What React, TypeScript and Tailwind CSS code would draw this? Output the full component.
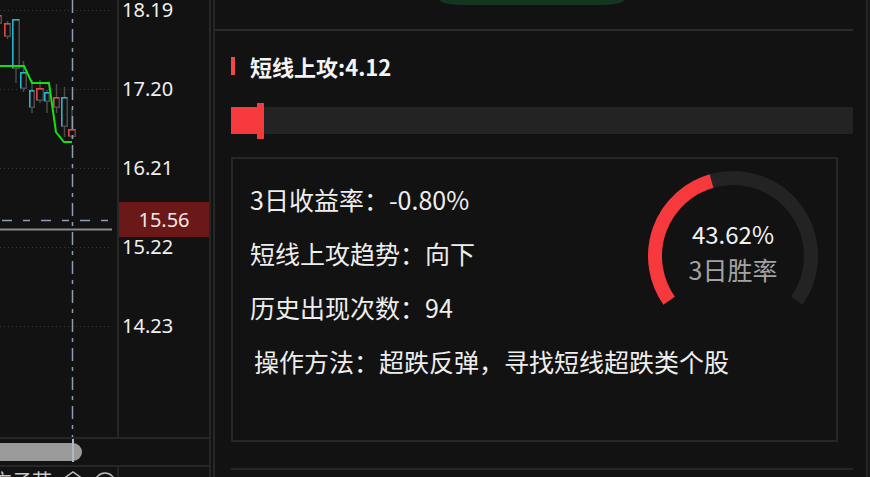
import React from 'react'

const RED = '#f5393c'

// candles: x, w, bodyTop, bodyBottom, wickTop, wickBottom, colour
const candles: [number, number, number, number, number, number, string][] = [
  [-4, 6, 15, 24, 13, 26, '#e04848'],
  [4, 7, 23, 37, 21, 39, '#e04848'],
  [12, 8, 19, 69, 19, 83, '#28b4c8'],
  [20, 7, 72, 89, 61, 92, '#28b4c8'],
  [29, 6, 90, 108, 80, 113, '#28b4c8'],
  [36, 8, 88, 101, 80, 103, '#e04848'],
  [44, 6, 92, 102, 90, 113, '#28b4c8'],
  [53, 7, 97, 108, 84, 113, '#e04848'],
  [61, 7, 97, 127, 87, 137, '#28b4c8'],
  [68, 8, 129, 137, 109, 139, '#e04848'],
]

const gridYs = [10, 89, 168, 247, 326]
const prices = ['18.19', '17.20', '16.21', '15.22', '14.23']

function Chart() {
  return (
    <svg width="117" height="437" className="block">
      {gridYs.map(y => (
        <line key={y} x1="0" x2="110" y1={y + 0.5} y2={y + 0.5} stroke="#3a3a3a" strokeDasharray="1 3" />
      ))}
      {candles.map(([x, w, t, b, wt, wb, c], i) => {
        const mx = x + w / 2
        return (
          <g key={i}>
            <line x1={mx} x2={mx} y1={wt} y2={t} stroke="#4a4a4a" strokeWidth="1.5" />
            <line x1={mx} x2={mx} y1={b} y2={wb} stroke="#4a4a4a" strokeWidth="1.5" />
            <rect x={x + 0.75} y={t + 0.75} width={w - 1.5} height={b - t - 1.5} fill="#121212" stroke="#4c4c4c" strokeWidth="1.5" />
            <polyline points={`${x + 0.75},${b - 1} ${x + 0.75},${t + 0.75} ${x + w - 0.75},${t + 0.75}`} fill="none" stroke={c} strokeWidth="1.5" />
          </g>
        )
      })}
      <polyline
        points="0,66 24,66 32,83 49,83 56,132 64,142 72,142"
        fill="none"
        stroke="#14e014"
        strokeWidth="2"
      />
      <line x1="72.5" x2="72.5" y1="0" y2="437" stroke="#8e9db4" strokeWidth="1.5" strokeDasharray="13 6 4 6" />
      <line x1="0" x2="110" y1="220.5" y2="220.5" stroke="#8e9db4" strokeWidth="1.5" strokeDasharray="10 11 7 11" strokeDashoffset="-2" />
      <line x1="0" x2="112" y1="229.5" y2="229.5" stroke="#8a8a8a" strokeWidth="2" />
    </svg>
  )
}

function polar(cx: number, cy: number, r: number, deg: number) {
  const a = (deg * Math.PI) / 180
  return [cx + r * Math.sin(a), cy - r * Math.cos(a)]
}

function arc(cx: number, cy: number, r: number, from: number, to: number) {
  const [x1, y1] = polar(cx, cy, r, from)
  const [x2, y2] = polar(cx, cy, r, to)
  const large = to - from > 180 ? 1 : 0
  return `M ${x1} ${y1} A ${r} ${r} 0 ${large} 1 ${x2} ${y2}`
}

function Gauge({ value }: { value: number }) {
  const start = -125
  const end = 125
  const mid = start + (end - start) * value
  return (
    <svg width="180" height="162" className="block overflow-visible shrink-0">
      <path d={arc(90, 84, 78, mid, end)} fill="none" stroke="#232323" strokeWidth="14" />
      <path d={arc(90, 84, 78, start, mid)} fill="none" stroke={RED} strokeWidth="14" />
      <text x="90" y="72" textAnchor="middle" fill="#f2f2f2" fontSize="24">
        43.62%
      </text>
      <text x="90" y="108" textAnchor="middle" fill="#a3a3a3" fontSize="25">
        3日胜率
      </text>
    </svg>
  )
}

export default function App() {
  return (
    <div className="w-[870px] h-[477px] bg-[#121212] flex overflow-hidden text-[#f0f0f0] font-['Noto_Sans_CJK_SC','Noto_Sans',sans-serif]">
      {/* left: chart + axis */}
      <div className="w-[211px] h-[477px] shrink-0 border-r-2 border-[#262626] flex flex-col overflow-hidden">
        <div className="h-[437px] shrink-0 flex">
          <div className="w-[117px] shrink-0">
            <Chart />
          </div>
          <div className="w-[2px] bg-[#262626]" />
          <div className="relative flex-1 flex flex-col pl-[3px] font-['Noto_Sans',sans-serif] text-[20px]">
            {prices.map(p => (
              <div key={p} className="h-[79px] leading-[20px] shrink-0">
                {p}
              </div>
            ))}
            <div className="absolute left-0 right-0 top-[202px] h-[35px] bg-[#6b1818] flex items-center justify-center text-[20px] text-[#f2e8e8]">
              15.56
            </div>
          </div>
        </div>
        <div className="h-[2px] shrink-0 bg-[#262626]" />
        <div className="relative h-[26px] shrink-0">
          <div className="absolute left-0 top-[4px] w-[82px] h-[18px] bg-[#9b9b9b] rounded-r-[9px]" />
          <div className="absolute left-[72px] top-0 w-[1.5px] h-[23px] bg-[#a9b8cc]" />
        </div>
        <div className="h-[2px] shrink-0 bg-[#262626]" />
        <div className="flex-1 min-h-0 flex">
          <div className="w-[117px] flex items-start gap-[10px] pt-[3px] text-[20px] leading-[22px] text-[#c8c8c8] overflow-hidden">
            <span className="-ml-[8px] whitespace-nowrap">方子节</span>
            <svg width="22" height="12" className="mt-[1px] shrink-0">
              <polyline points="1,12 1,8 11,1 21,8 21,12" fill="none" stroke="#bdbdbd" strokeWidth="1.5" />
            </svg>
            <svg width="22" height="12" className="mt-[1px] shrink-0">
              <circle cx="11" cy="12" r="10" fill="none" stroke="#bdbdbd" strokeWidth="1.5" />
              <circle cx="11" cy="12" r="4" fill="none" stroke="#bdbdbd" strokeWidth="1.5" />
            </svg>
          </div>
          <div className="w-[2px] bg-[#262626]" />
        </div>
      </div>
      <div className="w-[2px] shrink-0" />

      {/* right panel */}
      <div className="w-[655px] shrink-0 border-x-2 border-[#262626] flex flex-col">
        <div className="h-[31px] mr-[13px] border-b-2 border-[#2b2b2b]">
          <div className="ml-[225px] w-[184px] h-[5px] bg-[#14351f] rounded-b-[24px_6px]" />
        </div>
        <div className="pl-[16px] pr-[13px] flex flex-col">
          <div className="mt-[24px] h-[22px] flex items-center">
            <div className="w-[4px] h-[18px] bg-[#f04848]" />
            <div className="ml-[15px] text-[22px] font-bold leading-[22px] text-[#f4f4f4]">短线上攻:4.12</div>
          </div>
          <div className="relative mt-[30px] h-[27px] bg-[#232323]">
            <div className="w-[26px] h-full bg-[#f5393c]" />
            <div className="absolute left-[26px] -top-[4px] w-[7px] h-[36px] bg-[#f5393c]" />
          </div>
          <div className="mt-[23px] mr-[15px] h-[285px] border-2 border-[#262626] pt-[13px] pl-[17px] text-[25px] text-[#eeeeee]">
            <div className="flex items-start justify-between pr-[13px]">
              <div className="flex flex-col">
                <div className="h-[54px] leading-[54px]">3日收益率：-0.80%</div>
                <div className="h-[54px] leading-[54px]">短线上攻趋势：向下</div>
                <div className="h-[54px] leading-[54px]">历史出现次数：94</div>
              </div>
              <Gauge value={0.4362} />
            </div>
            <div className="h-[54px] leading-[54px] pl-[4px]">操作方法：超跌反弹，寻找短线超跌类个股</div>
          </div>
          <div className="mt-[26px] h-[2px] bg-[#262626]" />
        </div>
      </div>
      <div className="flex-1 bg-[#171717]" />
    </div>
  )
}
